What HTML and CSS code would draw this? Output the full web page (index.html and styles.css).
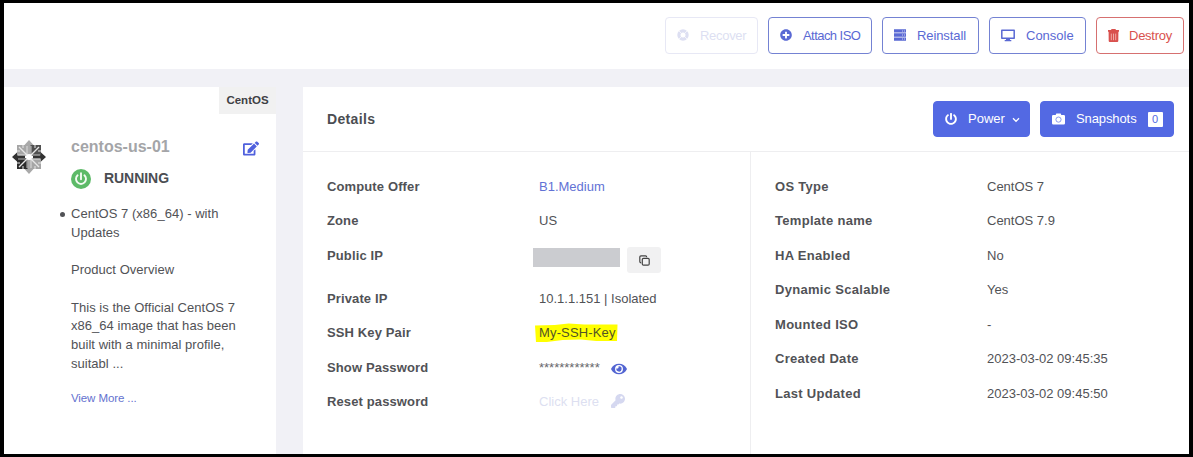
FILE: index.html
```html
<!DOCTYPE html>
<html lang="en">
<head>
<meta charset="utf-8">
<title>centos-us-01</title>
<link rel="stylesheet" href="styles.css">
</head>
<body>
<div class="frame">
  <header class="toolbar">
    <button class="btn btn-recover"><svg class="icon" viewBox="0 0 12 12"><circle cx="6" cy="6" r="4.1" fill="none" stroke="currentColor" stroke-width="3.2"/><path d="M1.600 1.600l2.600 2.600M10.400 1.600L7.800 4.200M1.600 10.400l2.600-2.600M10.400 10.400L7.800 7.800" stroke="#fff" stroke-width=".7"/></svg><span>Recover</span></button>
    <button class="btn btn-attach"><svg class="icon" viewBox="0 0 512 512"><path fill="currentColor" d="M256 8C119 8 8 119 8 256s111 248 248 248 248-111 248-248S393 8 256 8zm144 276c0 6.600-5.400 12-12 12h-92v92c0 6.600-5.400 12-12 12h-56c-6.600 0-12-5.400-12-12v-92h-92c-6.600 0-12-5.400-12-12v-56c0-6.600 5.400-12 12-12h92v-92c0-6.600 5.400-12 12-12h56c6.600 0 12 5.400 12 12v92h92c6.600 0 12 5.400 12 12v56z"/></svg><span>Attach ISO</span></button>
    <button class="btn btn-reinstall"><svg class="icon" viewBox="0 0 12 12"><path fill="currentColor" d="M0 .2h12v3.400H0zM0 4.300h12v3.400H0zM0 8.400h12v3.400H0z"/><path d="M8 2h1M10 2h1M8 6h1M10 6h1M8 10h1M10 10h1" stroke="#fff" stroke-width=".7"/></svg><span>Reinstall</span></button>
    <button class="btn btn-console"><svg class="icon icon-wide" viewBox="0 0 14 13"><path fill="none" stroke="currentColor" stroke-width="1.500" stroke-linejoin="round" d="M.8 1.200h12.400v8H.8z"/><path fill="currentColor" d="M5.400 9h3.200l.5 2h1.200v1.300H3.700V11h1.200z"/></svg><span>Console</span></button>
    <button class="btn btn-destroy"><svg class="icon icon-narrow" viewBox="0 0 11 13"><path fill="currentColor" d="M0 1h3L3.600 0h3.800L8 1h3v1.800H0zM.6 2.800h9.800L10.300 12q-.1.900-1 .9H1.700q-.9 0-1-.9z"/><path d="M3.300 4.600v6.600M5.500 4.600v6.600M7.700 4.600v6.600" stroke="#f9d0cc" stroke-width=".7"/></svg><span>Destroy</span></button>
  </header>
  <main class="content">
    <aside class="card summary">
      <div class="os-tag">CentOS</div>
      <div class="summary-body">
        <svg class="logo" viewBox="0 0 34 34">
          <path fill="#a6a6a6" d="M5 5h11v11H5zM18 18h11v11H18z"/>
          <path fill="#505050" d="M18 5h11v11H18z"/><path fill="#2c2c2c" d="M5 18h11v11H5z"/>
          <path d="M7 7l9 9M27 7l-9 9M7 27l9-9M27 27l-9-9" stroke="#e6e6e6" stroke-width="1.400"/>
          <path d="M5 11h3M11 5v3M29 11h-3M23 5v3M5 23h3M11 29v-3M29 23h-3M23 29v-3" stroke="#e6e6e6" stroke-width="1"/>
          <path fill="#a9a9a9" d="M17 0l4.500 5H18.500v10h-3V5h-3zM17 34l4.500-5H18.500V19h-3v10h-3z"/>
          <path fill="#333" d="M0 17l5-4.500v3h8v3H5v3zM34 17l-5-4.500v3h-8v3h8v3z"/>
          <path d="M15 6v9M19 6v9M15 19v9M19 19v9M6 15h8M6 19h8M20 15h8M20 19h8" stroke="#f4f4f4" stroke-width=".7"/>
          <circle cx="17" cy="17" r="3" fill="#fff"/>
        </svg>
        <div class="summary-info">
          <div class="name-row"><h2>centos-us-01</h2>
            <svg class="edit" viewBox="0 0 576 512"><path fill="currentColor" d="M402.600 83.200l90.200 90.200c3.800 3.800 3.800 10 0 13.800L274.400 405.600l-92.800 10.300c-12.400 1.400-22.900-9.100-21.500-21.500l10.300-92.800L388.800 83.200c3.800-3.800 10-3.800 13.800 0zm162-22.900l-48.800-48.800c-15.200-15.200-39.900-15.200-55.200 0l-35.400 35.400c-3.800 3.800-3.800 10 0 13.800l90.200 90.200c3.800 3.800 10 3.800 13.800 0l35.400-35.400c15.200-15.300 15.200-40 0-55.200zM384 346.200V448H64V128h229.800c3.200 0 6.200-1.300 8.500-3.500l40-40c7.600-7.600 2.200-20.500-8.500-20.500H48C21.500 64 0 85.500 0 112v352c0 26.500 21.500 48 48 48h352c26.500 0 48-21.500 48-48V306.200c0-10.700-12.900-16-20.500-8.500l-40 40c-2.200 2.300-3.500 5.300-3.500 8.500z"/></svg></div>
          <div class="status-row"><svg class="status" viewBox="0 0 20 20"><circle cx="10" cy="10" r="10" fill="#5dba68"/><path d="M6.600 6.300a5 5 0 1 0 6.800 0M10 4.300v6" fill="none" stroke="#f3fbf3" stroke-width="1.900" stroke-linecap="round"/></svg><span>RUNNING</span></div>
          <ul class="desc"><li>CentOS 7 (x86_64) - with<br>Updates<br><br>Product Overview<br><br>This is the Official CentOS 7<br>x86_64 image that has been<br>built with a minimal profile,<br>suitabl ...</li></ul>
          <a class="more">View More ...</a>
        </div>
      </div>
    </aside>
    <section class="card details">
      <div class="details-head">
        <h3>Details</h3>
        <div class="actions">
          <button class="btn solid btn-power"><svg class="icon" viewBox="0 0 512 512"><path fill="currentColor" d="M400 54.100c63 45 104 118.600 104 201.900 0 136.800-110.800 247.700-247.500 248C120 504.300 8.200 393 8 256.400 7.900 173.100 48.900 99.300 111.800 54.200c11.700-8.300 28-4.800 35 7.700L162.600 90c5.900 10.500 3.100 23.800-6.600 31-41.500 30.800-68 79.600-68 134.900-.1 92.300 74.500 168.100 168 168.100 91.600 0 168.600-74.200 168-169.100-.3-51.800-24.700-101.800-68.100-134-9.700-7.200-12.400-20.500-6.500-30.900l15.800-28.100c7-12.400 23.200-16.100 34.800-7.800zM296 264V24c0-13.300-10.700-24-24-24h-32c-13.300 0-24 10.700-24 24v240c0 13.300 10.700 24 24 24h32c13.300 0 24-10.700 24-24z"/></svg><span>Power</span><svg class="chevron" viewBox="0 0 8 6"><path d="M1 1.300l3 3 3-3" fill="none" stroke="currentColor" stroke-width="1.300"/></svg></button>
          <button class="btn solid btn-snap"><svg class="icon icon-cam" viewBox="0 0 13 12"><path fill="currentColor" d="M1.200 2h2.500L4.300.5h4.400L9.300 2h2.500Q13 2 13 3.200v7q0 1.200-1.200 1.200H1.200Q0 11.400 0 10.200v-7Q0 2 1.200 2z"/><circle cx="6.500" cy="6.600" r="2.600" fill="none" stroke="#7d8fec" stroke-width=".9"/></svg><span>Snapshots</span><b class="count">0</b></button>
        </div>
      </div>
      <div class="details-body">
        <dl class="col">
          <div class="row"><dt>Compute Offer</dt><dd><a>B1.Medium</a></dd></div>
          <div class="row"><dt>Zone</dt><dd>US</dd></div>
          <div class="row row-ip"><dt>Public IP</dt><dd><i class="mask"></i><span class="copy"><svg viewBox="0 0 11 11"><rect x="3.300" y="3.300" width="6.900" height="6.900" rx="1.200" fill="none" stroke="#444" stroke-width="1.200"/><path d="M2.200 7.800Q.8 7.800.8 6.500V2Q.8.800 2 .8h4.500q1.200 0 1.200 1.400" fill="none" stroke="#444" stroke-width="1.200"/></svg></span></dd></div>
          <div class="row"><dt>Private IP</dt><dd>10.1.1.151 | Isolated</dd></div>
          <div class="row"><dt>SSH Key Pair</dt><dd><mark><svg viewBox="0 0 84 19" preserveAspectRatio="none"><path fill="#ff0" d="M0 2.500L20 2 34 .5 50 1.500H83.500L83 18 62 18 46 16.500 28 17 12 19H1z"/></svg><span>My-SSH-Key</span></mark></dd></div>
          <div class="row"><dt>Show Password</dt><dd><span class="stars">************</span><svg class="eye" viewBox="0 0 576 512"><path fill="currentColor" d="M572.520 241.400C518.290 135.590 410.930 64 288 64S57.680 135.640 3.480 241.410a32.350 32.350 0 0 0 0 29.190C57.710 376.410 165.070 448 288 448s230.320-71.640 284.520-177.410a32.350 32.350 0 0 0 0-29.190zM288 400a144 144 0 1 1 144-144 143.930 143.930 0 0 1-144 144zm0-240a95.310 95.310 0 0 0-25.310 3.790 47.850 47.850 0 0 1-66.900 66.900A95.780 95.780 0 1 0 288 160z"/></svg></dd></div>
          <div class="row"><dt>Reset password</dt><dd class="faded">Click Here<svg class="key" viewBox="0 0 512 512"><path fill="currentColor" d="M512 176C512 273.200 433.200 352 336 352c-11.200 0-22.200-1-32.800-3.100l-24 27A24 24 0 0 1 261.200 384H224v40c0 13.300-10.700 24-24 24h-40v40c0 13.300-10.700 24-24 24H24c-13.300 0-24-10.700-24-24v-78c0-6.400 2.500-12.500 7-17l161.800-161.800C163.100 213.800 160 195.300 160 176 160 78.800 238.800 0 336 0c97.500 0 176 78.500 176 176zM336 128c0 26.500 21.500 48 48 48s48-21.500 48-48-21.500-48-48-48-48 21.500-48 48z"/></svg></dd></div>
        </dl>
        <dl class="col col-right">
          <div class="row"><dt>OS Type</dt><dd>CentOS 7</dd></div>
          <div class="row"><dt>Template name</dt><dd>CentOS 7.9</dd></div>
          <div class="row"><dt>HA Enabled</dt><dd>No</dd></div>
          <div class="row"><dt>Dynamic Scalable</dt><dd>Yes</dd></div>
          <div class="row"><dt>Mounted ISO</dt><dd>-</dd></div>
          <div class="row"><dt>Created Date</dt><dd>2023-03-02 09:45:35</dd></div>
          <div class="row"><dt>Last Updated</dt><dd>2023-03-02 09:45:50</dd></div>
        </dl>
      </div>
    </section>
  </main>
</div>
</body>
</html>
```
FILE: styles.css
```css
* { box-sizing: border-box; }
body { margin: 0; background: #000; color: #515256; font: 13px/20px "Liberation Sans", Arial, sans-serif; overflow: hidden; }
h2, h3, dl, dd, ul { margin: 0; padding: 0; }
svg { display: block; flex: none; }
.frame { height: 457px; border: solid #000; border-width: 3px 4px; background: #f1f1f6; display: flex; flex-direction: column; }
.toolbar { height: 66px; flex: none; background: #fff; display: flex; justify-content: flex-end; gap: 10px; padding: 14px 5px 0 0; }
.btn { font: inherit; height: 37px; display: flex; align-items: center; padding: 0 0 0 11px; border: 1px solid #7482d3; border-radius: 4px; background: #fff; color: #5a69d4; white-space: nowrap; }
.toolbar .btn svg { margin-top: -1px; }
.icon { width: 12px; height: 12px; margin-right: 11px; }
.icon-wide { width: 14px; height: 13px; }
.icon-narrow { width: 11px; height: 13px; margin-right: 10px; }
.btn-recover { width: 93px; border-color: #e7e8f5; color: #dddff2; letter-spacing: -.3px; }
.btn-attach { width: 104px; letter-spacing: -.55px; }
.btn-reinstall { width: 97px; letter-spacing: -.1px; }
.btn-console { width: 97px; }
.btn-destroy { width: 88px; border-color: #d67070; color: #d9514e; letter-spacing: -.25px; }
.content { flex: 1; display: flex; gap: 27px; padding-top: 18px; min-height: 0; }
.card { background: #fff; }
.summary { width: 272px; flex: none; display: flex; flex-direction: column; }
.os-tag { align-self: flex-end; width: 57px; height: 27px; background: #f1f1f1; color: #3f4044; font-size: 11.500px; font-weight: bold; line-height: 27px; text-align: center; }
.summary-body { display: flex; padding: 21px 17px 0 8px; }
.logo { width: 34px; height: 34px; margin-top: 5px; }
.summary-info { flex: 1; padding-left: 25px; }
.name-row { display: flex; justify-content: space-between; align-items: center; height: 24px; }
.name-row h2 { font-size: 16px; color: #a4a5a8; }
.edit { width: 16px; height: 15px; color: #4f60dd; margin-top: 3px; }
.status-row { display: flex; align-items: center; gap: 13px; height: 39px; font-size: 14px; font-weight: bold; color: #4b4d52; letter-spacing: -.05px; }
.status { width: 20px; height: 20px; }
.status-row span { margin-top: -2px; }
.desc { list-style: none; padding-top: 7px; line-height: 18.700px; white-space: nowrap; }
.desc li { display: flow-root; position: relative; letter-spacing: .03px; }
.desc li::before { content: ""; position: absolute; left: -11px; top: 7px; width: 5px; height: 5px; border-radius: 50%; background: #515256; }
.more { display: block; margin-top: 15px; font-size: 11.500px; letter-spacing: -.1px; color: #6472cf; }
.details { flex: 1; min-width: 0; display: flex; flex-direction: column; }
.details-head { height: 65px; display: flex; justify-content: space-between; align-items: center; padding: 0 15px 0 24px; border-bottom: 1px solid #eeeef0; }
.details-head h3 { font-size: 14px; letter-spacing: .35px; color: #4b4d52; }
.actions { display: flex; gap: 10px; }
.solid { height: 36px; border-color: #5369e3; background: #5369e3; color: #fff; }
.btn-power { width: 97px; }
.btn-snap { width: 134px; }
.icon-cam { width: 13px; }
.btn-snap span { letter-spacing: -.1px; }
.chevron { width: 8px; height: 6px; margin: 2px 0 0 7px; }
.count { width: 15px; height: 15px; margin-left: 11px; background: #fff; border-radius: 1px; color: #5369e3; font: 11px/15px "Liberation Sans", Arial, sans-serif; text-align: center; }
.details-body { flex: 1; display: flex; }
.col { width: 447px; flex: none; padding: 24.500px 0 0 24px; }
.col-right { flex: 1; border-left: 1px solid #eeeef0; }
.row { display: flex; height: 34.600px; }
.row-ip { height: 43px; }
dt { width: 212px; flex: none; font-weight: bold; letter-spacing: .12px; }
.col-right dt { letter-spacing: .3px; }
dd { display: flex; white-space: nowrap; }
dd a { color: #6272d5; }
.mask { width: 87px; height: 19px; margin: 0 7px 0 -6px; background: #cbccd0; }
.row-ip dd { padding-top: 1px; }
.row-ip .mask { margin-top: 1px; }
.copy { width: 34px; height: 26px; background: #f1f1f2; border-radius: 3px; display: grid; place-items: center; }
.copy svg { width: 11px; height: 11px; margin-top: 2px; }
mark { background: none; color: #535426; position: relative; letter-spacing: .15px; }
mark svg { position: absolute; left: -4px; top: 0; width: 83px; height: 19px; }
mark span { position: relative; }
.stars { color: #66676b; }
.eye { width: 16px; height: 14px; margin: 4px 0 0 11px; color: #5365d2; }
.faded { color: #dddff1; }
.key { width: 14px; height: 14px; margin: 2px 0 0 12px; color: #d5d8f0; }
```
